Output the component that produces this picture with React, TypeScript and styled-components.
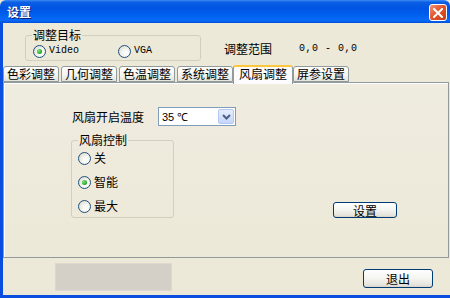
import styled, { createGlobalStyle } from "styled-components"

const GlobalStyle = createGlobalStyle`
  html, body {
    margin: 0;
    padding: 0;
    background: #ece9d8;
  }
  body {
    font-family: "Noto Sans CJK SC", "DejaVu Sans", sans-serif;
    font-size: 12px;
    color: #000;
  }
`

const tabs = ["色彩调整", "几何调整", "色温调整", "系统调整", "风扇调整", "屏参设置"]
const fanModes = ["关", "智能", "最大"]

const Radio = ({ label, checked, mono }: { label: string; checked?: boolean; mono?: boolean }) => (
  <RadioItem>
    <RadioCircle $checked={checked} />
    <RadioLabel $mono={mono}>{label}</RadioLabel>
  </RadioItem>
)

export default function App() {
  return (
    <>
      <GlobalStyle />
      <Window>
        <TitleBar>
          <Title>设置</Title>
          <CloseButton>
            <svg width="10" height="10" viewBox="0 0 10 10">
              <path d="M1 1 L9 9 M9 1 L1 9" stroke="#fff" strokeWidth="2" strokeLinecap="square" />
            </svg>
          </CloseButton>
        </TitleBar>
        <Body>
          <TopRow>
            <TargetGroup>
              <Legend>调整目标</Legend>
              <TargetOptions>
                <Radio label="Video" checked mono />
                <Radio label="VGA" mono />
              </TargetOptions>
            </TargetGroup>
            <RangeLabel>调整范围</RangeLabel>
            <RangeValue>0,0 - 0,0</RangeValue>
          </TopRow>
          <TabStrip>
            {tabs.map((t) => (
              <Tab key={t} $active={t === "风扇调整"}>
                {t}
              </Tab>
            ))}
          </TabStrip>
          <Panel>
            <TempRow>
              <FieldLabel>风扇开启温度</FieldLabel>
              <Combo>
                <ComboText>35 ℃</ComboText>
                <ComboArrow>
                  <svg width="9" height="6" viewBox="0 0 9 6">
                    <path d="M1 1 L4.5 4.5 L8 1" stroke="#4d6185" strokeWidth="2" fill="none" />
                  </svg>
                </ComboArrow>
              </Combo>
            </TempRow>
            <ControlRow>
              <FanGroup>
                <Legend>风扇控制</Legend>
                <FanOptions>
                  {fanModes.map((m) => (
                    <Radio key={m} label={m} checked={m === "智能"} />
                  ))}
                </FanOptions>
              </FanGroup>
              <SetButton>设置</SetButton>
            </ControlRow>
          </Panel>
          <Footer>
            <StatusBox />
            <ExitButton>退出</ExitButton>
          </Footer>
        </Body>
      </Window>
    </>
  )
}

const Window = styled.div`
  display: flex;
  flex-direction: column;
  width: 450px;
  height: 298px;
  overflow: hidden;
`

const TitleBar = styled.div`
  display: flex;
  align-items: center;
  justify-content: space-between;
  height: 23px;
  padding: 0 3px 0 7px;
  box-sizing: border-box;
  background: linear-gradient(
    to bottom,
    #3d8bf5 0%,
    #0a5fe4 10%,
    #0054e3 35%,
    #0062f0 70%,
    #0a6af8 88%,
    #0050d8 100%
  );
  border-radius: 6px 6px 0 0;
`

const Title = styled.span`
  color: #fff;
  font-weight: 700;
  font-size: 12px;
  text-shadow: 1px 1px 0 #0a1e73;
  line-height: 23px;
`

const CloseButton = styled.div`
  display: flex;
  align-items: center;
  justify-content: center;
  width: 18px;
  height: 17px;
  margin-top: 2px;
  box-sizing: border-box;
  border: 1px solid #fff;
  border-radius: 3px;
  background: linear-gradient(to bottom right, #f29478 0%, #e2572f 45%, #c83c14 100%);
`

const Body = styled.div`
  display: flex;
  flex-direction: column;
  flex: 1;
  background: #ece9d8;
  border-left: 3px solid #0a4ee0;
  border-bottom: 3px solid #0a4ee0;
`

const TopRow = styled.div`
  display: flex;
  align-items: center;
  height: 33px;
  margin-top: 5px;
  padding-left: 22px;
`

const GroupBox = styled.fieldset`
  margin: 0;
  box-sizing: border-box;
  border: 1px solid #d0d0bf;
  border-radius: 3px;
  min-width: 0;
`

const Legend = styled.legend`
  padding: 0 1px;
  margin-left: 0;
  font-size: 12px;
  line-height: 14px;
  color: #000;
`

const TargetGroup = styled(GroupBox)`
  width: 176px;
  height: 33px;
  padding: 0 6px;
`

const TargetOptions = styled.div`
  display: flex;
  gap: 39px;
  padding-left: 1px;
  height: 18px;
  align-items: center;
`

const RadioItem = styled.div`
  display: flex;
  align-items: center;
  gap: 3px;
  height: 18px;
`

const RadioCircle = styled.span<{ $checked?: boolean }>`
  display: flex;
  align-items: center;
  justify-content: center;
  width: 13px;
  height: 13px;
  box-sizing: border-box;
  border: 1px solid #1c5180;
  border-radius: 50%;
  background: radial-gradient(circle at 65% 65%, #ffffff 0%, #f4f4f0 40%, #d6d3c6 100%);
  &::after {
    content: "";
    display: ${(p) => (p.$checked ? "block" : "none")};
    width: 5px;
    height: 5px;
    border-radius: 50%;
    background: radial-gradient(circle at 35% 35%, #7be57b 0%, #21a121 70%);
  }
`

const RadioLabel = styled.span<{ $mono?: boolean }>`
  font-family: ${(p) =>
    p.$mono ? '"Liberation Mono", monospace' : '"Noto Sans CJK SC", sans-serif'};
  font-size: ${(p) => (p.$mono ? "10px" : "12px")};
  line-height: 14px;
`

const RangeLabel = styled.span`
  margin-left: 23px;
  margin-top: 8px;
`

const RangeValue = styled.span`
  margin-left: 27px;
  margin-top: 8px;
  font-family: "Liberation Mono", monospace;
  font-size: 10px;
  letter-spacing: 0.5px;
`

const TabStrip = styled.div`
  display: flex;
  align-items: flex-end;
  height: 17px;
  margin-top: 4px;
  position: relative;
  z-index: 1;
`

const Tab = styled.div<{ $active?: boolean }>`
  display: flex;
  align-items: center;
  justify-content: center;
  box-sizing: border-box;
  width: ${(p) => (p.$active ? "60px" : "56px")};
  height: ${(p) => (p.$active ? "19px" : "16px")};
  margin-right: ${(p) => (p.$active ? "0" : "2px")};
  margin-bottom: ${(p) => (p.$active ? "-2px" : "0")};
  margin-left: ${(p) => (p.$active ? "-2px" : "0")};
  border: 1px solid #919b9c;
  border-bottom: ${(p) => (p.$active ? "none" : "1px solid #919b9c")};
  border-top: ${(p) => (p.$active ? "2px solid #ffc83c" : "1px solid #919b9c")};
  border-radius: 3px 3px 0 0;
  background: ${(p) =>
    p.$active ? "#fcfcfe" : "linear-gradient(to bottom, #ffffff 0%, #f3f3ef 60%, #e4e2d8 100%)"};
  font-size: 12px;
  line-height: 14px;
  padding-bottom: ${(p) => (p.$active ? "3px" : "0")};
`

const Panel = styled.div`
  display: flex;
  flex-direction: column;
  box-sizing: border-box;
  width: 446px;
  height: 176px;
  border: 1px solid #919b9c;
  box-shadow: inset 1px 1px 0 #fff;
  background: linear-gradient(to bottom, #efece0 0%, #ece9d8 100%);
  padding: 24px 0 0 68px;
`

const TempRow = styled.div`
  display: flex;
  align-items: center;
  height: 19px;
`

const FieldLabel = styled.span`
  width: 86px;
`

const Combo = styled.div`
  display: flex;
  align-items: center;
  justify-content: space-between;
  box-sizing: border-box;
  width: 78px;
  height: 19px;
  border: 1px solid #7f9db9;
  background: #fff;
  padding: 0 1px 0 3px;
`

const ComboText = styled.span`
  font-family: "Liberation Sans", sans-serif;
  font-size: 11px;
`

const ComboArrow = styled.div`
  display: flex;
  align-items: center;
  justify-content: center;
  box-sizing: border-box;
  width: 16px;
  height: 15px;
  border: 1px solid #b4c8f6;
  border-radius: 2px;
  background: linear-gradient(to bottom, #e6eefc 0%, #c6d6fa 100%);
`

const ControlRow = styled.div`
  display: flex;
  align-items: flex-end;
  margin-top: 7px;
  margin-left: -1px;
  padding-right: 51px;
`

const FanGroup = styled(GroupBox)`
  width: 103px;
  height: 85px;
  padding: 2px 6px 0;
`

const FanOptions = styled.div`
  display: flex;
  flex-direction: column;
  gap: 6px;
`

const XpButton = styled.div`
  display: flex;
  align-items: center;
  justify-content: center;
  box-sizing: border-box;
  border: 1px solid #003c74;
  border-radius: 3px;
  background: linear-gradient(to bottom, #ffffff 0%, #f4f4f0 50%, #e3e2da 90%, #d6d0c5 100%);
  font-size: 12px;
`

const SetButton = styled(XpButton)`
  margin-left: auto;
  width: 64px;
  height: 16px;
`

const Footer = styled.div`
  display: flex;
  align-items: flex-start;
  flex: 1;
  padding: 5px 17px 0 52px;
`

const StatusBox = styled.div`
  width: 117px;
  height: 28px;
  background: #d4d0c8;
  border: 1px solid #dcd8cf;
  box-sizing: border-box;
`

const ExitButton = styled(XpButton)`
  margin-left: auto;
  margin-top: 6px;
  width: 70px;
  height: 19px;
`
